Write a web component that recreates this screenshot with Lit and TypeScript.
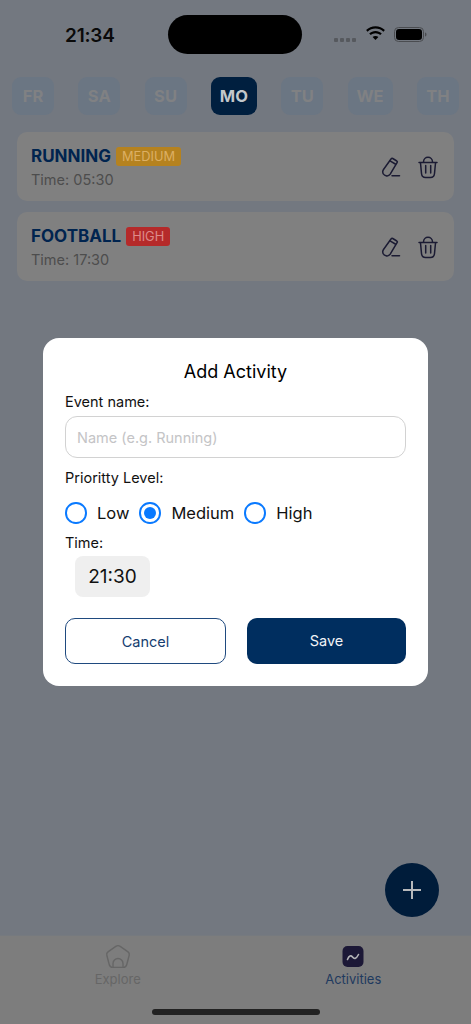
import { LitElement, html, css, svg } from "lit";
import { customElement } from "lit/decorators.js";

const DAYS = ["FR", "SA", "SU", "MO", "TU", "WE", "TH"];
const ACTIVITIES = [
  { name: "RUNNING", level: "MEDIUM", cls: "medium", time: "05:30" },
  { name: "FOOTBALL", level: "HIGH", cls: "high", time: "17:30" },
];
const LEVELS = ["Low", "Medium", "High"];

const penIcon = svg`<svg class="icon" width="22" height="24" viewBox="0 0 22 24" fill="none" stroke="#1b1b33" stroke-width="1.5" stroke-linecap="round" stroke-linejoin="round">
  <path d="M12.7 3.5L16.8 6Q17.7 6.6 17.2 7.4L10.2 19.2Q8.9 21.2 6.7 21L4.6 20.1Q2.7 19.2 2.7 17Q2.7 15.6 3.5 14.500L11 4Q11.8 3 12.7 3.5Z"/>
  <path d="M10 5.800L15.300 9"/><path d="M12 20.700H19.500"/></svg>`;
const trashIcon = svg`<svg class="icon" width="22" height="24" viewBox="0 0 22 24" fill="none" stroke="#1b1b33" stroke-width="1.500" stroke-linecap="round" stroke-linejoin="round">
  <path d="M6.500 7C6.500 .8 15.500 .8 15.500 7"/><path d="M2 7.500H20"/>
  <path d="M3.500 8L4.500 18.500Q4.900 22.500 8.500 22.500H13.500Q17.100 22.500 17.500 18.500L18.500 8"/>
  <path d="M8.700 10.500V18M13.700 10.500V18"/></svg>`;

@customElement("app-root")
export class AppRoot extends LitElement {
  static styles = css`
    :host { display: block; width: 471px; height: 1024px; overflow: hidden; position: relative; font-family: Inter, "Noto Sans", sans-serif; background: #737880; color: #000; }
    .page { height: 1024px; display: flex; flex-direction: column; }
    .status { height: 77px; flex: none; position: relative; display: flex; }
    .clock { position: absolute; left: 65px; top: 24px; font-size: 19px; line-height: 23px; font-weight: 600; letter-spacing: -0.2px; color: #0a0a0a; }
    .island { position: absolute; left: 168px; top: 15px; width: 134px; height: 39px; border-radius: 20px; background: #000; }
    .dots { position: absolute; left: 334px; top: 38px; display: flex; gap: 2px; }
    .dots i { width: 4px; height: 4px; border-radius: 1px; background: #56595e; }
    .wifi { position: absolute; left: 365px; top: 26px; }
    .battery { position: absolute; left: 394px; top: 27px; }
    .days { display: flex; justify-content: space-between; padding: 0 12px; flex: none; }
    .day { height: 38px; min-width: 42px; padding: 0 9px; flex: none; box-sizing: border-box; border-radius: 9px; background: #6b7683; color: #808183; font-size: 16.500px; font-weight: 700; display: flex; align-items: center; justify-content: center; }
    .day.on { background: #001f3f; color: #c3c7cb; min-width: 46px; }
    .list { display: flex; flex-direction: column; gap: 11px; padding: 17px 17px 0; flex: 1; }
    .card { height: 69px; box-sizing: border-box; background: #808080; border-radius: 10px; padding: 14px 14px 0 14px; display: flex; justify-content: space-between; }
    .head { display: flex; align-items: center; gap: 5px; height: 20px; }
    .name { font-size: 17px; line-height: 20px; font-weight: 700; color: #00244f; }
    .badge { height: 19px; border-radius: 3px; padding: 0 6px; font-size: 12.800px; line-height: 19px; }
    .badge.medium { background: #b5821f; color: #dcaf63; }
    .badge.high { background: #b52a2a; color: #dd8a8a; }
    .time { margin-top: 5px; font-size: 14.500px; line-height: 18px; color: #4d4d4d; }
    .acts { display: flex; gap: 15px; padding-top: 9px; align-items: flex-start; margin-right: 1px; }
    .icon { display: block; }
    .tabs { height: 89px; flex: none; box-sizing: border-box; background: #7d7d7d; border-top: 1px solid #767a7f; display: grid; grid-template-columns: 1fr 1fr; }
    .tab { display: flex; flex-direction: column; align-items: center; padding-top: 8px; font-size: 13px; line-height: 16px; color: #666; gap: 1px; }
    .tab.on { color: #1f3a5f; }
    .tab svg { display: block; }
    .indicator { position: absolute; left: 152px; top: 1009px; width: 168px; height: 6px; border-radius: 3px; background: #222; }
    .fab { position: absolute; left: 385px; top: 863px; width: 54px; height: 54px; border-radius: 50%; background: #001c3a; display: flex; align-items: center; justify-content: center; }
    .modal-wrap { position: absolute; inset: 0; display: flex; align-items: center; justify-content: center; }
    .modal { width: 385px; height: 348px; box-sizing: border-box; background: #fff; border-radius: 16px; padding: 22px 22px 0; display: flex; flex-direction: column; }
    .title { text-align: center; font-size: 18px; line-height: 23px; color: #000; }
    .label { font-size: 14.500px; line-height: 18px; color: #111; }
    .l1 { margin-top: 10px; }
    input { display: block; margin-top: 5px; height: 42px; width: 100%; box-sizing: border-box; border: 1px solid #d2d2d2; border-radius: 12px; padding: 0 11px; font: 14.500px Inter, sans-serif; background: #fff; outline: none; }
    input::placeholder { color: #c4c4c6; opacity: 1; }
    .l2 { margin-top: 11px; }
    .radios { display: flex; align-items: center; margin-top: 15px; height: 22px; gap: 10px; }
    .radio { display: flex; align-items: center; gap: 10.500px; font-size: 16.500px; color: #111; }
    .dot { width: 21.500px; height: 21.500px; box-sizing: border-box; border: 2px solid #0a7aff; border-radius: 50%; display: flex; align-items: center; justify-content: center; background: #fff; }
    .dot.on::after { content: ""; width: 12px; height: 12px; border-radius: 50%; background: #0a7aff; }
    .l3 { margin-top: 10px; }
    .picker { margin: 4px 0 0 10px; width: 75px; height: 41px; border-radius: 8px; background: #efefef; display: flex; align-items: center; justify-content: center; font-size: 19px; color: #111; }
    .btns { display: flex; justify-content: space-between; margin-top: 21px; }
    .btn { height: 46px; border-radius: 10px; box-sizing: border-box; display: flex; align-items: center; justify-content: center; font-size: 14.500px; }
    .cancel { width: 161px; background: #fff; border: 1px solid #1f4a7f; color: #143d70; }
    .save { width: 159px; background: #002e5f; color: #f1f3f6; padding-bottom: 2px; }
  `;

  render() {
    return html`
      <div class="page">
        <div class="status">
          <span class="clock">21:34</span>
          <div class="island"></div>
          <div class="dots"><i></i><i></i><i></i><i></i></div>
          <svg class="wifi" width="21" height="16" viewBox="0 0 21 16">
            <path d="M10.500 2.600c3 0 5.800 1.100 7.900 3.100l1.500-1.600C17.400 1.700 14.100.3 10.500.3S3.600 1.700 1.100 4.100l1.500 1.600c2.100-2 4.900-3.100 7.900-3.100z" fill="#000"/>
            <path d="M10.500 7.200c1.800 0 3.400.7 4.700 1.800l1.600-1.600c-1.700-1.500-3.900-2.500-6.300-2.500S5.900 5.900 4.200 7.400L5.800 9c1.300-1.100 2.900-1.800 4.700-1.800z" fill="#000"/>
            <path d="M10.500 9.900c-1.100 0-2.100.4-2.900 1.100l2.900 3.100 2.900-3.100c-.8-.7-1.800-1.100-2.900-1.100z" fill="#000"/>
          </svg>
          <svg class="battery" width="34" height="16" viewBox="0 0 34 16">
            <rect x=".5" y=".5" width="29" height="14" rx="4" fill="none" stroke="#4a4c50"/>
            <rect x="2" y="2" width="26" height="11" rx="3" fill="#000"/>
            <path d="M31 5.500c1 .3 1.500 1 1.500 2s-.5 1.700-1.500 2z" fill="#4a4c50"/>
          </svg>
        </div>
        <div class="days">${DAYS.map((d) => html`<div class="day ${d === "MO" ? "on" : ""}">${d}</div>`)}</div>
        <div class="list">
          ${ACTIVITIES.map((a) => html`
            <div class="card">
              <div>
                <div class="head"><span class="name">${a.name}</span><span class="badge ${a.cls}">${a.level}</span></div>
                <div class="time">Time: ${a.time}</div>
              </div>
              <div class="acts">${penIcon}${trashIcon}</div>
            </div>`)}
        </div>
        <div class="tabs">
          <div class="tab">
            <svg width="26" height="26" viewBox="0 0 26 26" fill="none" stroke="#666" stroke-width="1.400" stroke-linejoin="round">
              <path d="M10.800 2.400Q13 .9 15.200 2.400L23 7.900Q24.800 9.200 24.200 11.300L21.700 20.800Q21 23.400 18.400 23.400H7.600Q5 23.400 4.300 20.800L1.800 11.300Q1.200 9.200 3 7.900Z"/>
              <path d="M8 23.400V19.500A5 5 0 0 1 18 19.500V23.400"/>
            </svg>
            <span>Explore</span>
          </div>
          <div class="tab on">
            <svg width="26" height="26" viewBox="0 0 26 26">
              <rect x="2.500" y="2" width="21" height="21" rx="5" fill="#1c1836"/>
              <path d="M7.500 15.500C9 11.500 11 11 12.500 13S16 15.500 18.500 10.500" fill="none" stroke="#b5b5b8" stroke-width="1.600" stroke-linecap="round"/>
            </svg>
            <span>Activities</span>
          </div>
        </div>
      </div>
      <div class="fab">
        <svg width="20" height="20" viewBox="0 0 20 20"><path d="M10 1V19M1 10H19" stroke="#b7b9bb" stroke-width="2"/></svg>
      </div>
      <div class="indicator"></div>
      <div class="modal-wrap">
        <div class="modal">
          <div class="title">Add Activity</div>
          <div class="label l1">Event name:</div>
          <input placeholder="Name (e.g. Running)" />
          <div class="label l2">Prioritty Level:</div>
          <div class="radios">
            ${LEVELS.map((l) => html`<div class="radio"><span class="dot ${l === "Medium" ? "on" : ""}"></span>${l}</div>`)}
          </div>
          <div class="label l3">Time:</div>
          <div class="picker">21:30</div>
          <div class="btns">
            <div class="btn cancel">Cancel</div>
            <div class="btn save">Save</div>
          </div>
        </div>
      </div>
    `;
  }
}
